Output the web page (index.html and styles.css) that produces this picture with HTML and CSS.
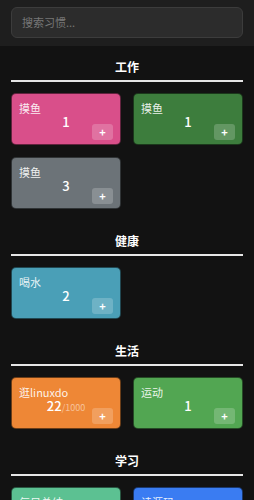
FILE: index.html
```html
<!DOCTYPE html>
<html lang="zh">
<head>
<meta charset="utf-8">
<link rel="stylesheet" href="styles.css">
</head>
<body>
<header class="top">
  <div class="search">搜索习惯...</div>
</header>
<main>
  <section class="group">
    <h2 class="group-title">工作</h2>
    <div class="grid">
      <div class="card pink"><div class="name">摸鱼</div><div class="count">1</div><span class="plus">+</span></div>
      <div class="card green"><div class="name">摸鱼</div><div class="count">1</div><span class="plus">+</span></div>
      <div class="card gray"><div class="name">摸鱼</div><div class="count">3</div><span class="plus">+</span></div>
    </div>
  </section>
  <section class="group">
    <h2 class="group-title">健康</h2>
    <div class="grid">
      <div class="card teal"><div class="name">喝水</div><div class="count">2</div><span class="plus">+</span></div>
    </div>
  </section>
  <section class="group">
    <h2 class="group-title">生活</h2>
    <div class="grid">
      <div class="card orange"><div class="name">逛linuxdo</div><div class="count">22<span class="goal">/1000</span></div><span class="plus">+</span></div>
      <div class="card green2"><div class="name">运动</div><div class="count">1</div><span class="plus">+</span></div>
    </div>
  </section>
  <section class="group">
    <h2 class="group-title">学习</h2>
    <div class="grid">
      <div class="card mint"><div class="name">每日总结</div><div class="count">1</div><span class="plus">+</span></div>
      <div class="card blue"><div class="name">读源码</div><div class="count">1</div><span class="plus">+</span></div>
    </div>
  </section>
</main>
</body>
</html>
```
FILE: styles.css
```css
* { box-sizing: border-box; }
html, body { margin: 0; padding: 0; }
body {
  background: #121212;
  color: #fff;
  font-family: "Noto Sans CJK SC", "Noto Sans", sans-serif;
}
.top {
  background: #1e1e1e;
  padding: 7px 11px 8px;
}
.search {
  height: 31px;
  border: 1px solid #3c3c3c;
  background: #2c2c2c;
  border-radius: 6px;
  padding: 0 10px;
  font-size: 11px;
  line-height: 29px;
  color: #777;
}
.group { padding: 0 11px 11px; }
.group-title {
  margin: 0;
  padding: 12px 0 5px;
  border-bottom: 2px solid #e6e6e6;
  text-align: center;
  font-size: 12px;
  line-height: 17px;
  font-weight: 700;
  color: #fff;
}
.grid {
  margin-top: 11px;
  display: grid;
  grid-template-columns: 110px 110px;
  gap: 12px;
}
.card {
  position: relative;
  height: 52px;
  border-radius: 5px;
  border: 1px solid rgba(0,0,0,0.55);
  padding: 7px 7px 0;
}
.name {
  font-size: 11px;
  line-height: 14px;
  color: rgba(255,255,255,0.9);
}
.count {
  text-align: center;
  font-size: 13px;
  line-height: 14px;
  font-weight: 500;
}
.goal {
  font-size: 9px;
  font-weight: 400;
  color: rgba(255,255,255,0.5);
}
.plus {
  position: absolute;
  right: 7px;
  bottom: 4px;
  width: 21px;
  height: 16px;
  border-radius: 3px;
  background: rgba(255,255,255,0.2);
  font-size: 11px;
  line-height: 16px;
  font-weight: 700;
  text-align: center;
  color: #fff;
}
.pink { background: #d94f8a; }
.green { background: #3d7d3d; }
.gray { background: #6c7378; }
.teal { background: #4a9fb7; }
.orange { background: #ee8736; }
.green2 { background: #52a652; }
.mint { background: #5cc192; }
.blue { background: #3a7cf2; }
```
